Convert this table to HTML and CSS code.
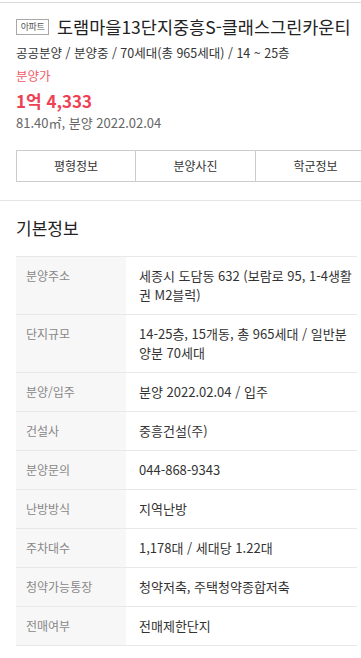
FILE: index.html
```html
<!DOCTYPE html>
<html lang="ko">
<head>
<meta charset="utf-8">
<title>도램마을13단지중흥S-클래스그린카운티</title>
<link rel="stylesheet" href="styles.css">
</head>
<body>
<div class="page">
  <section class="summary">
    <h1 class="title-row">
      <span class="badge">아파트</span>
      <span class="title">도램마을13단지중흥S-클래스그린카운티</span>
    </h1>
    <p class="sub">공공분양 / 분양중 / 70세대(총 965세대) / 14 ~ 25층</p>
    <p class="price-label">분양가</p>
    <p class="price">1억 4,333</p>
    <p class="meta">81.40㎡, 분양 2022.02.04</p>
    <nav class="tabs">
      <a class="tab">평형정보</a>
      <a class="tab">분양사진</a>
      <a class="tab">학군정보</a>
    </nav>
  </section>
  <section class="basic">
    <h2 class="heading">기본정보</h2>
    <table class="info">
      <tr><th>분양주소</th><td>세종시 도담동 632 (보람로 95, 1-4생활권 M2블럭)</td></tr>
      <tr><th>단지규모</th><td>14-25층, 15개동, 총 965세대 / 일반분양분 70세대</td></tr>
      <tr><th>분양/입주</th><td>분양 2022.02.04 / 입주</td></tr>
      <tr><th>건설사</th><td>중흥건설(주)</td></tr>
      <tr><th>분양문의</th><td>044-868-9343</td></tr>
      <tr><th>난방방식</th><td>지역난방</td></tr>
      <tr><th>주차대수</th><td>1,178대 / 세대당 1.22대</td></tr>
      <tr><th>청약가능통장</th><td>청약저축, 주택청약종합저축</td></tr>
      <tr><th>전매여부</th><td>전매제한단지</td></tr>
    </table>
  </section>
</div>
</body>
</html>
```
FILE: styles.css
```css
html, body {
  margin: 0;
  padding: 0;
  background: #fff;
}
body {
  font-family: "Noto Sans CJK KR", "Noto Sans", sans-serif;
  color: #333;
  overflow: hidden;
}
.page {
  width: 361px;
  padding-top: 2px;
}
p, h1, h2 { margin: 0; }

.summary {
  border-top: 1px solid #dcdcdc;
  border-bottom: 1px solid #e6e6e6;
  padding: 12px 0 18px 16px;
}
.title-row {
  display: flex;
  align-items: center;
  gap: 8px;
  height: 24px;
  white-space: nowrap;
  font-weight: normal;
}
.badge {
  flex: none;
  box-sizing: border-box;
  width: 33px;
  height: 16px;
  border: 1px solid #a8a8a8;
  font-size: 9px;
  letter-spacing: -0.4px;
  line-height: 14px;
  text-align: center;
  color: #555;
}
.title {
  font-size: 17.5px;
  line-height: 24px;
  color: #222;
}
.sub {
  margin-top: 5px;
  font-size: 12.5px;
  line-height: 18px;
  color: #333;
  white-space: nowrap;
}
.price-label {
  margin-top: 5px;
  font-size: 12.5px;
  line-height: 18px;
  color: #f25a6a;
}
.price {
  margin-top: 4px;
  font-size: 17px;
  line-height: 24px;
  font-weight: bold;
  color: #ee4254;
}
.meta {
  margin-top: 1px;
  font-size: 13px;
  line-height: 18px;
  color: #666;
}
.tabs {
  display: flex;
  margin-top: 18px;
  width: 360px;
}
.tab {
  flex: none;
  box-sizing: border-box;
  width: 120px;
  height: 32px;
  border: 1px solid #cccccc;
  border-left-width: 0;
  font-size: 12px;
  line-height: 30px;
  text-align: center;
  color: #333;
}
.tab:first-child { border-left-width: 1px; }

.basic {
  padding: 15px 0 0 16px;
}
.heading {
  font-size: 17px;
  line-height: 24px;
  font-weight: normal;
  color: #222;
}
.info {
  margin-top: 16px;
  width: 341px;
  border-collapse: collapse;
}
.info tr {
  border-top: 1px solid #e8e8e8;
  border-bottom: 1px solid #e8e8e8;
}
.info th, .info td {
  padding: 9px 0 10px;
  line-height: 19px;
  vertical-align: top;
  text-align: left;
  font-weight: normal;
}
.info th {
  width: 100px;
  padding-left: 10px;
  background: #f7f7f7;
  font-size: 12px;
  color: #888;
}
.info td {
  padding-left: 13px;
  font-size: 13px;
  color: #333;
}
```
